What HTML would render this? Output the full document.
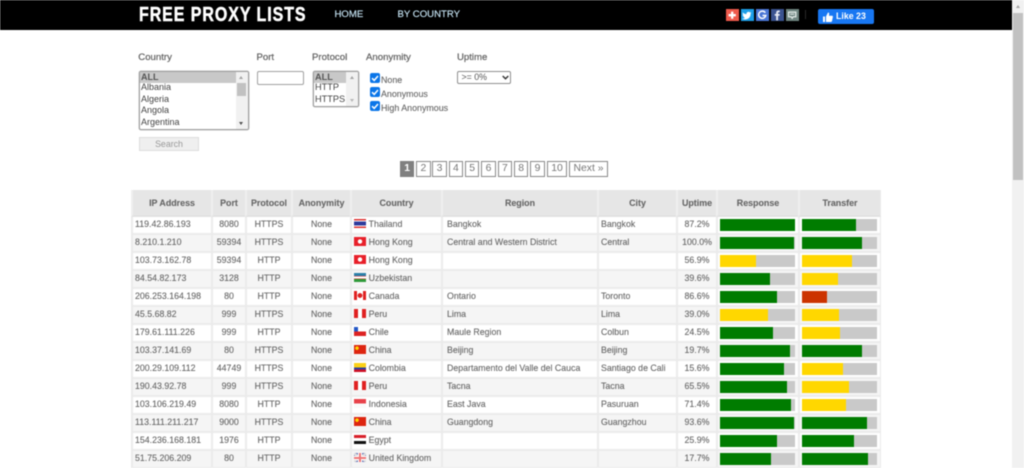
<!DOCTYPE html>
<html lang="en">
<head>
<meta charset="utf-8">
<title>Free Proxy Lists</title>
<style>
html,body{margin:0;padding:0;background:#fff;width:1024px;height:468px;overflow:hidden}
#w{position:relative;width:1024px;height:468px;overflow:hidden;font-family:"Liberation Sans",Arial,sans-serif;color:#666;filter:blur(.4px)}
#w .a,#w .l{position:absolute}
.l{font-size:9.6px;line-height:12px;white-space:nowrap;color:#666;-webkit-text-stroke:.25px #666}
#top{position:absolute;left:0;top:0;width:1011.5px;height:29.5px;background:#000}
#logo{position:absolute;left:139px;top:3px;font-size:20.5px;line-height:24px;font-weight:bold;letter-spacing:1.2px;color:#fff;white-space:nowrap;transform-origin:0 0;transform:scaleX(.78);-webkit-text-stroke:.5px #fff}
.nav{position:absolute;top:9px;font-size:9.6px;line-height:12px;color:#c4e2f2;white-space:nowrap;-webkit-text-stroke:.15px #c4e2f2}
.s{position:absolute;top:9px;width:12.4px;height:12.4px}
.s svg{position:absolute;left:0;top:0}
#like{position:absolute;left:818px;top:9px;width:55.5px;height:15px;background:#1877f2;border-radius:2px;color:#fff;font-size:8.8px;font-weight:bold;line-height:15px;white-space:nowrap}
#like span{position:absolute;left:18px;top:0}
#like svg{position:absolute;left:5px;top:2.5px}
#sb{position:absolute;left:1012px;top:0;width:12px;height:468px;background:#f1f1f1}
#th{position:absolute;left:1px;top:13px;width:10px;height:167px;background:#c1c1c1}
#sb i{position:absolute;left:3.5px;top:5px;width:0;height:0;border-left:2.5px solid transparent;border-right:2.5px solid transparent;border-bottom:3px solid #a3a3a3}
.lb{position:absolute;box-sizing:border-box;border:1px solid #a0a0a0;border-radius:2px;background:#fff;overflow:hidden;box-shadow:0 0 0 .5px #c4c4c4}
.lb div.o{position:absolute;left:0;right:12px;height:11.7px;line-height:11.7px;font-size:9px;color:#444;padding-left:1.5px}
.lb div.on{background:#c8c8c8;font-weight:bold;color:#555}
.lb div.t{position:absolute;right:0;top:0;bottom:0;width:12px;background:#f1f1f1}
.up,.dn{position:absolute;left:3.5px;width:0;height:0;border-left:2.5px solid transparent;border-right:2.5px solid transparent}
.up{top:4px;border-bottom:3px solid #a3a3a3}
.dn{bottom:4px;border-top:3px solid #505050}
.cb{position:absolute;left:369.5px;width:10px;height:10px;background:#0a75e8;border-radius:2px}
.cb svg{position:absolute;left:0;top:0}
.ck{position:absolute;left:381px;font-size:8.9px;line-height:12px;color:#666;white-space:nowrap;-webkit-text-stroke:.1px #666}
.p{position:absolute;top:160.5px;height:16.3px;box-sizing:border-box;border:1px solid #8a8a8a;font-size:10.4px;line-height:14.3px;text-align:center;color:#777;background:#fff}
table{position:absolute;left:131px;top:190px;width:750px;table-layout:fixed;border-collapse:separate;border-spacing:0;font-size:8.8px;color:#666;-webkit-text-stroke:.1px #666}
th,td{box-sizing:border-box;padding:0;white-space:nowrap;overflow:hidden;border-left:2px solid #ebebeb;border-bottom:2px solid #ebebeb}
th{height:27px;background:#e6e6e6;font-size:8.9px;font-weight:bold;color:#666;border-left:2px solid #efefef;border-bottom:2px solid #e2e2e2}
td{height:18px;line-height:15px;padding-bottom:1px;text-align:center}
tbody td:nth-child(n+9){vertical-align:top;padding:0}
tbody tr:nth-child(even) td{background:#f5f5f5}
tbody tr:nth-child(odd) td{background:#fff}
td.x{text-align:left;padding-left:2px}
td.i{text-align:left;padding-left:2px}
td.y{text-align:left;padding-left:4px}
td.z{text-align:left;padding-left:2px}
th:last-child,td:last-child{border-right:1px solid #ebebeb}
.b{width:75px;height:11.4px;margin:2.3px 0 0 2.2px;background:#c9c9c9}
.b b{display:block;height:100%}
.g{background:#007c00}.h{background:#ffd700}.r{background:#cc3300}
.f{display:inline-block;width:12px;height:9px;vertical-align:-1px;margin-right:2.6px}
.th{background:linear-gradient(#d33 0 17%,#fff 17% 30%,#2d3a9c 30% 70%,#fff 70% 83%,#d33 83%)}
.hk{background:radial-gradient(circle at 50% 50%,#fff 0 2px,transparent 2.4px),#e8202a}
.uz{background:linear-gradient(#2b7fa8 0 34%,#e33 34% 38%,#fff 38% 62%,#e33 62% 66%,#2f9a3a 66%)}
.ca{background:linear-gradient(90deg,#e02020 0 25%,transparent 25% 75%,#e02020 75%),radial-gradient(circle at 50% 50%,#d22 0 2.2px,#fff 2.6px)}
.pe{background:linear-gradient(90deg,#e02020 0 33%,#fff 33% 67%,#e02020 67%)}
.cl{background:linear-gradient(90deg,#2357c5 0 33%,transparent 33%) 0 0/100% 50% no-repeat,linear-gradient(#fff 0 50%,#dd2222 50%)}
.cn{background:radial-gradient(circle at 25% 35%,#ffd400 0 1.6px,transparent 2px),#dd2510}
.co{background:linear-gradient(#fcd116 0 50%,#2a3fa0 50% 75%,#ce1126 75%)}
.id{background:linear-gradient(#e8424a 0 50%,#fafafa 50%)}
.eg{background:linear-gradient(#d8202a 0 33%,#fff 33% 67%,#111 67%)}
.gb{background:linear-gradient(#e77,#e77) 50% 50%/100% 2px no-repeat,linear-gradient(#e77,#e77) 50% 50%/2px 100% no-repeat,linear-gradient(#fff,#fff) 50% 50%/100% 4px no-repeat,linear-gradient(#fff,#fff) 50% 50%/4px 100% no-repeat,linear-gradient(33deg,transparent 42%,#ddd 42% 58%,transparent 58%),linear-gradient(-33deg,transparent 42%,#ddd 42% 58%,transparent 58%),#6a78b8}
</style>
</head>
<body>
<div id="w">
<div id="top"></div>
<div id="logo">FREE PROXY LISTS</div>
<div class="nav" style="left:334.5px">HOME</div>
<div class="nav" style="left:397.5px">BY COUNTRY</div>

<div class="s" style="left:726.3px;background:#ee5a4c"><svg width="12.4" height="12.4" viewBox="0 0 12 12"><path d="M6 2.5v7M2.5 6h7" stroke="#fff" stroke-width="2.2"/></svg></div>
<div class="s" style="left:741.3px;background:#1d9fe8"><svg width="12.4" height="12.4" viewBox="0 0 12 12"><path d="M10 3.6c-.4.2-.7.3-1.1.3.4-.2.7-.6.8-1-.4.2-.8.4-1.2.4a1.9 1.900 0 0 0-3.2 1.700C3.700 5 2.500 4.300 1.800 3.300c-.4.800-.2 1.700.5 2.300-.3 0-.6-.1-.8-.2 0 .9.600 1.600 1.500 1.800-.3.100-.6.100-.8 0 .2.700.9 1.300 1.700 1.300-.8.600-1.800.9-2.800.8 3.900 2.200 8.500-.3 8.200-4.800.3-.2.500-.5.700-.7z" fill="#fff"/></svg></div>
<div class="s" style="left:756.3px;background:#4a76d6"><svg width="12.4" height="12.4" viewBox="0 0 12 12"><path d="M9 3.600A3.500 3.500 0 1 0 9.500 6.300H6.300" fill="none" stroke="#fff" stroke-width="1.400"/></svg></div>
<div class="s" style="left:771.3px;background:#3b5390"><svg width="12.4" height="12.4" viewBox="0 0 12 12"><path d="M6.800 11V6.500h1.500l.2-1.700H6.800V3.900c0-.5.200-.8.800-.8h.9V1.600C8.300 1.600 7.800 1.500 7.200 1.500 5.900 1.500 5 2.300 5 3.700v1.100H3.600v1.700H5V11z" fill="#e8ecf5"/></svg></div>
<div class="s" style="left:786.3px;background:#6f8581"><svg width="12.4" height="12.4" viewBox="0 0 12 12"><path d="M2.500 3h7v4.500H7L6 9 5 7.500H2.500z" fill="none" stroke="#e6eeec" stroke-width="1.200"/><path d="M4 5h4" stroke="#e6eeec"/></svg></div>
<div class="a" style="left:805px;top:10px;width:1px;height:9px;background:#2a2a2a"></div>
<div id="like"><svg width="10" height="10" viewBox="0 0 10 10"><path d="M0 4.500h2V10H0zM3 4.500L5 .5c.8 0 1.300.6 1.200 1.400L5.900 3.700H9c.7 0 1 .6.900 1.200L9 9c-.1.600-.5 1-1.100 1H3z" fill="#fff"/></svg><span>Like 23</span></div>

<div id="sb"><i></i><div id="th"></div></div>

<div class="l" style="left:138.3px;top:51.5px">Country</div>
<div class="l" style="left:256.5px;top:51.5px">Port</div>
<div class="l" style="left:312px;top:51.5px">Protocol</div>
<div class="l" style="left:366px;top:51.5px">Anonymity</div>
<div class="l" style="left:457px;top:51.5px">Uptime</div>

<div class="lb" style="left:138.5px;top:70.5px;width:110px;height:59px">
<div class="o on" style="top:0">ALL</div>
<div class="o" style="top:10.5px">Albania</div>
<div class="o" style="top:22.5px">Algeria</div>
<div class="o" style="top:33.5px">Angola</div>
<div class="o" style="top:45.5px">Argentina</div>
<div class="t"><span class="up"></span><div style="position:absolute;left:1px;top:11px;width:9px;height:13px;background:#c1c1c1"></div><span class="dn"></span></div>
</div>

<div class="a" style="left:256.5px;top:70.5px;width:47.5px;height:14.5px;box-sizing:border-box;border:1px solid #a0a0a0;border-radius:2px;background:#fff"></div>

<div class="lb" style="left:312.5px;top:70.5px;width:46.5px;height:36px">
<div class="o on" style="top:0;font-size:9.2px">ALL</div>
<div class="o" style="top:10.5px;font-size:9.2px">HTTP</div>
<div class="o" style="top:22.5px;font-size:9.2px">HTTPS</div>
<div class="t"><span class="up"></span><span class="dn" style="border-top-color:#b5b5b5"></span></div>
</div>

<div class="cb" style="top:72.5px"><svg width="10" height="10" viewBox="0 0 10 10"><path d="M2 5.200l2.200 2.200L8 3" fill="none" stroke="#fff" stroke-width="1.500"/></svg></div>
<div class="cb" style="top:86.5px"><svg width="10" height="10" viewBox="0 0 10 10"><path d="M2 5.200l2.200 2.200L8 3" fill="none" stroke="#fff" stroke-width="1.500"/></svg></div>
<div class="cb" style="top:101px"><svg width="10" height="10" viewBox="0 0 10 10"><path d="M2 5.200l2.200 2.200L8 3" fill="none" stroke="#fff" stroke-width="1.500"/></svg></div>
<div class="ck" style="top:73.5px">None</div>
<div class="ck" style="top:87.5px">Anonymous</div>
<div class="ck" style="top:101.5px">High Anonymous</div>

<div class="a" style="left:457px;top:70.5px;width:54px;height:13.5px;box-sizing:border-box;border:1px solid #8f8f8f;border-radius:2px;background:#fff;font-size:8.8px;line-height:11.5px;padding-left:3.5px;color:#555">&gt;= 0%<svg style="position:absolute;left:43.5px;top:3.5px" width="7" height="5" viewBox="0 0 7 5"><path d="M.7 1l2.800 2.800L6.300 1" fill="none" stroke="#333" stroke-width="1.400"/></svg></div>

<div class="a" style="left:139px;top:137px;width:60px;height:14px;box-sizing:border-box;border:1px solid #ddd;background:#efefef;color:#999;font-size:8.8px;line-height:12.5px;text-align:center">Search</div>

<div class="p" style="left:400px;width:14.3px;background:#808080;border-color:#808080;color:#fff;font-weight:bold">1</div>
<div class="p" style="left:416px;width:14.7px">2</div>
<div class="p" style="left:432.3px;width:14.4px">3</div>
<div class="p" style="left:448.7px;width:14.3px">4</div>
<div class="p" style="left:465px;width:14.3px">5</div>
<div class="p" style="left:481.3px;width:14.4px">6</div>
<div class="p" style="left:497.7px;width:14.3px">7</div>
<div class="p" style="left:514px;width:14.3px">8</div>
<div class="p" style="left:530.3px;width:14.4px">9</div>
<div class="p" style="left:546.7px;width:20.6px">10</div>
<div class="p" style="left:569.3px;width:38.4px">Next »</div>

<table>
<colgroup><col style="width:80px"><col style="width:34px"><col style="width:46px"><col style="width:59px"><col style="width:91px"><col style="width:156px"><col style="width:79px"><col style="width:40px"><col style="width:82px"><col style="width:83px"></colgroup>
<thead><tr><th>IP Address</th><th>Port</th><th>Protocol</th><th>Anonymity</th><th>Country</th><th>Region</th><th>City</th><th>Uptime</th><th>Response</th><th>Transfer</th></tr></thead>
<tbody>
<tr><td class="x">119.42.86.193</td><td>8080</td><td>HTTPS</td><td>None</td><td class="i"><span class="f th"></span>Thailand</td><td class="y">Bangkok</td><td class="z">Bangkok</td><td>87.2%</td><td><div class="b"><b class="g" style="width:75px"></b></div></td><td><div class="b"><b class="g" style="width:54px"></b></div></td></tr>
<tr><td class="x">8.210.1.210</td><td>59394</td><td>HTTPS</td><td>None</td><td class="i"><span class="f hk"></span>Hong Kong</td><td class="y">Central and Western District</td><td class="z">Central</td><td>100.0%</td><td><div class="b"><b class="g" style="width:73.7px"></b></div></td><td><div class="b"><b class="g" style="width:60px"></b></div></td></tr>
<tr><td class="x">103.73.162.78</td><td>59394</td><td>HTTP</td><td>None</td><td class="i"><span class="f hk"></span>Hong Kong</td><td class="y"></td><td class="z"></td><td>56.9%</td><td><div class="b"><b class="h" style="width:36px"></b></div></td><td><div class="b"><b class="h" style="width:49.7px"></b></div></td></tr>
<tr><td class="x">84.54.82.173</td><td>3128</td><td>HTTP</td><td>None</td><td class="i"><span class="f uz"></span>Uzbekistan</td><td class="y"></td><td class="z"></td><td>39.6%</td><td><div class="b"><b class="g" style="width:50.3px"></b></div></td><td><div class="b"><b class="h" style="width:36.3px"></b></div></td></tr>
<tr><td class="x">206.253.164.198</td><td>80</td><td>HTTP</td><td>None</td><td class="i"><span class="f ca"></span>Canada</td><td class="y">Ontario</td><td class="z">Toronto</td><td>86.6%</td><td><div class="b"><b class="g" style="width:57px"></b></div></td><td><div class="b"><b class="r" style="width:24.7px"></b></div></td></tr>
<tr><td class="x">45.5.68.82</td><td>999</td><td>HTTPS</td><td>None</td><td class="i"><span class="f pe"></span>Peru</td><td class="y">Lima</td><td class="z">Lima</td><td>39.0%</td><td><div class="b"><b class="h" style="width:48px"></b></div></td><td><div class="b"><b class="h" style="width:37.3px"></b></div></td></tr>
<tr><td class="x">179.61.111.226</td><td>999</td><td>HTTP</td><td>None</td><td class="i"><span class="f cl"></span>Chile</td><td class="y">Maule Region</td><td class="z">Colbun</td><td>24.5%</td><td><div class="b"><b class="g" style="width:52.7px"></b></div></td><td><div class="b"><b class="h" style="width:38.3px"></b></div></td></tr>
<tr><td class="x">103.37.141.69</td><td>80</td><td>HTTPS</td><td>None</td><td class="i"><span class="f cn"></span>China</td><td class="y">Beijing</td><td class="z">Beijing</td><td>19.7%</td><td><div class="b"><b class="g" style="width:70px"></b></div></td><td><div class="b"><b class="g" style="width:60px"></b></div></td></tr>
<tr><td class="x">200.29.109.112</td><td>44749</td><td>HTTPS</td><td>None</td><td class="i"><span class="f co"></span>Colombia</td><td class="y">Departamento del Valle del Cauca</td><td class="z">Santiago de Cali</td><td>15.6%</td><td><div class="b"><b class="g" style="width:63.7px"></b></div></td><td><div class="b"><b class="h" style="width:40.7px"></b></div></td></tr>
<tr><td class="x">190.43.92.78</td><td>999</td><td>HTTPS</td><td>None</td><td class="i"><span class="f pe"></span>Peru</td><td class="y">Tacna</td><td class="z">Tacna</td><td>65.5%</td><td><div class="b"><b class="g" style="width:66.7px"></b></div></td><td><div class="b"><b class="h" style="width:46.7px"></b></div></td></tr>
<tr><td class="x">103.106.219.49</td><td>8080</td><td>HTTP</td><td>None</td><td class="i"><span class="f id"></span>Indonesia</td><td class="y">East Java</td><td class="z">Pasuruan</td><td>71.4%</td><td><div class="b"><b class="g" style="width:70.7px"></b></div></td><td><div class="b"><b class="h" style="width:43.7px"></b></div></td></tr>
<tr><td class="x">113.111.211.217</td><td>9000</td><td>HTTPS</td><td>None</td><td class="i"><span class="f cn"></span>China</td><td class="y">Guangdong</td><td class="z">Guangzhou</td><td>93.6%</td><td><div class="b"><b class="g" style="width:73.7px"></b></div></td><td><div class="b"><b class="g" style="width:65.3px"></b></div></td></tr>
<tr><td class="x">154.236.168.181</td><td>1976</td><td>HTTP</td><td>None</td><td class="i"><span class="f eg"></span>Egypt</td><td class="y"></td><td class="z"></td><td>25.9%</td><td><div class="b"><b class="g" style="width:57px"></b></div></td><td><div class="b"><b class="g" style="width:52px"></b></div></td></tr>
<tr><td class="x">51.75.206.209</td><td>80</td><td>HTTP</td><td>None</td><td class="i"><span class="f gb"></span>United Kingdom</td><td class="y"></td><td class="z"></td><td>17.7%</td><td><div class="b"><b class="g" style="width:51px"></b></div></td><td><div class="b"><b class="g" style="width:66.3px"></b></div></td></tr>
</tbody>
</table>
</div>
</body>
</html>
